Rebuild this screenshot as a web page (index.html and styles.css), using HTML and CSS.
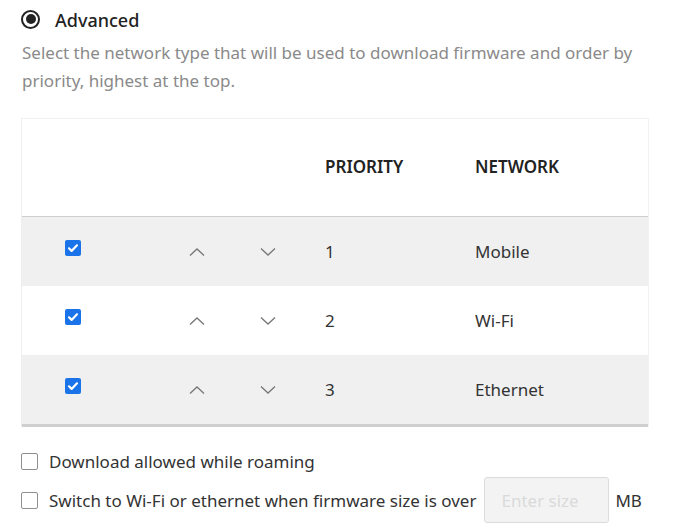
FILE: index.html
```html
<!DOCTYPE html>
<html>
<head>
<meta charset="utf-8">
<link rel="stylesheet" href="styles.css">
</head>
<body>
<div class="page">
  <label class="radio-row">
    <span class="radio"><span class="radio-dot"></span></span>
    <span class="radio-label">Advanced</span>
  </label>
  <p class="desc">Select the network type that will be used to download firmware and order by priority, highest at the top.</p>

  <div class="table">
    <div class="row head">
      <span class="c-check"></span>
      <span class="c-up"></span>
      <span class="c-down"></span>
      <span class="c-prio">PRIORITY</span>
      <span class="c-net">NETWORK</span>
    </div>
    <div class="row grey">
      <span class="c-check"><span class="cb on"><svg viewBox="0 0 16 16"><path d="M4 8.3l2.6 2.6L12 5.3" /></svg></span></span>
      <span class="c-up"><svg class="chev" viewBox="0 0 16 8"><path d="M1 7.5L8 1l7 6.5"/></svg></span>
      <span class="c-down"><svg class="chev" viewBox="0 0 16 8"><path d="M1 0.5L8 7l7-6.5"/></svg></span>
      <span class="c-prio">1</span>
      <span class="c-net">Mobile</span>
    </div>
    <div class="row">
      <span class="c-check"><span class="cb on"><svg viewBox="0 0 16 16"><path d="M4 8.3l2.6 2.6L12 5.3" /></svg></span></span>
      <span class="c-up"><svg class="chev" viewBox="0 0 16 8"><path d="M1 7.5L8 1l7 6.5"/></svg></span>
      <span class="c-down"><svg class="chev" viewBox="0 0 16 8"><path d="M1 0.5L8 7l7-6.5"/></svg></span>
      <span class="c-prio">2</span>
      <span class="c-net">Wi-Fi</span>
    </div>
    <div class="row grey last">
      <span class="c-check"><span class="cb on"><svg viewBox="0 0 16 16"><path d="M4 8.3l2.6 2.6L12 5.3" /></svg></span></span>
      <span class="c-up"><svg class="chev" viewBox="0 0 16 8"><path d="M1 7.5L8 1l7 6.5"/></svg></span>
      <span class="c-down"><svg class="chev" viewBox="0 0 16 8"><path d="M1 0.5L8 7l7-6.5"/></svg></span>
      <span class="c-prio">3</span>
      <span class="c-net">Ethernet</span>
    </div>
  </div>

  <div class="opt">
    <span class="cb off"></span>
    <span>Download allowed while roaming</span>
  </div>
  <div class="opt opt2">
    <span class="cb off"></span>
    <span>Switch to Wi-Fi or ethernet when firmware size is over</span>
    <span class="size-input">Enter size</span>
    <span>MB</span>
  </div>
</div>
</body>
</html>
```
FILE: styles.css
```css
* { box-sizing: border-box; }
html, body { margin: 0; padding: 0; background: #fff; }
body {
  font-family: "Noto Sans", "Open Sans", sans-serif;
  color: #222;
  width: 697px;
  height: 532px;
  overflow: hidden;
}
.page { padding: 9px 0 0 21px; width: 649px; }

.radio-row { display: flex; align-items: center; height: 22px; }
.radio {
  width: 19px; height: 19px; border: 2px solid #222; border-radius: 50%;
  display: flex; align-items: center; justify-content: center;
  margin-top: -2px;
}
.radio-dot { width: 10px; height: 10px; border-radius: 50%; background: #222; }
.radio-label { margin-left: 15px; font-size: 18px; font-weight: 500; color: #222; }

.desc {
  margin: 8px 0 0 1px;
  font-size: 17px; line-height: 28px; color: #8a8a8a;
}

.table {
  margin-top: 23px;
  border-top: 1px solid #f0f0f0;
  border-left: 1px solid #eee;
  border-right: 1px solid #f2f2f2;
  width: 628px;
}
.row {
  display: flex; align-items: center;
  height: 69px;
  padding-left: 43px;
  font-size: 17px; color: #333;
}
.row.head { height: 98px; border-bottom: 1px solid #cfcfcf; font-weight: 600; color: #222; padding-bottom: 2px; }
.row.grey { background: #f0f0f0; }
.row.last { border-bottom: 3px solid #cfcfcf; height: 72px; }
.c-check { width: 16px; margin-right: 108px; display: flex; margin-top: -8px; }
.c-up { width: 16px; margin-right: 55px; display: flex; }
.c-down { width: 16px; margin-right: 49px; display: flex; }
.c-prio { width: 150px; }
.row.head .c-check { margin-top: 0; }
.chev { width: 16px; height: 8px; fill: none; stroke: #777; stroke-width: 1.3; }

.cb { width: 16px; height: 16px; border-radius: 2px; display: inline-flex; flex: none; }
.cb.on { background: #1a73e8; }
.cb.on svg { width: 16px; height: 16px; fill: none; stroke: #fff; stroke-width: 2.2; stroke-linecap: round; stroke-linejoin: round; }
.cb.off { border: 1px solid #8f8f8f; border-radius: 2px; width: 17px; height: 17px; }

.opt {
  display: flex; align-items: center;
  margin-top: 24px;
  font-size: 17px; color: #333;
  gap: 11px;
  height: 20px;
}
.opt2 { margin-top: 6px; height: 46px; }
.size-input {
  width: 125px; height: 46px;
  background: #f3f3f3; border: 1px solid #dcdcdc; border-radius: 3px;
  color: #dadada; padding-left: 16px;
  display: flex; align-items: center;
  margin-left: -3px; margin-right: -5px;
}
```
